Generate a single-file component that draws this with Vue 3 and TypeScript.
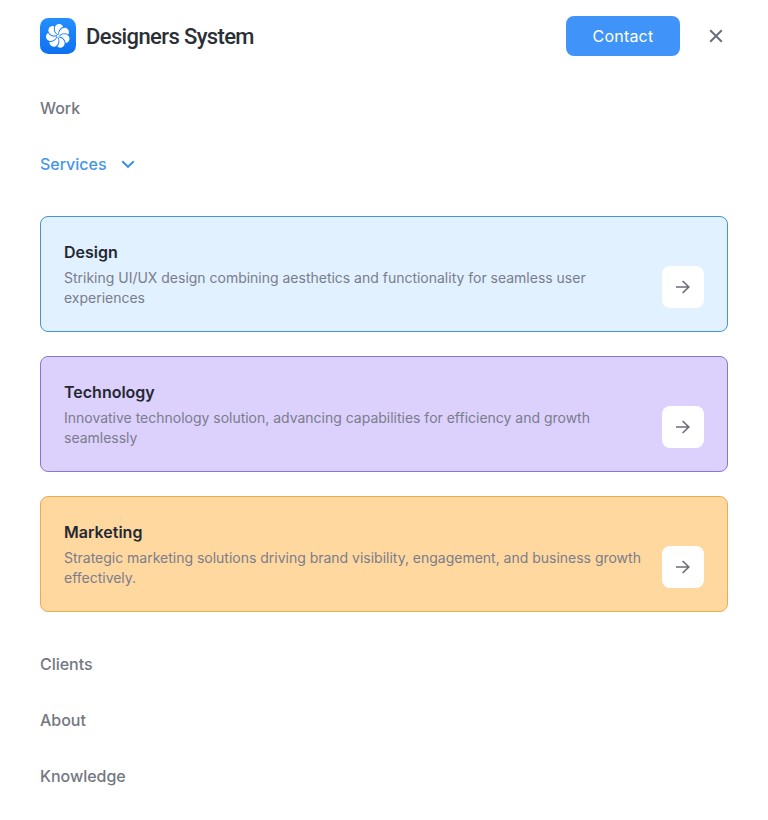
<script setup lang="ts">
import { ref } from 'vue'

interface Service {
  id: string
  title: string
  text: string
}

const services: Service[] = [
  {
    id: 'design',
    title: 'Design',
    text: 'Striking UI/UX design combining aesthetics and functionality for seamless user experiences',
  },
  {
    id: 'technology',
    title: 'Technology',
    text: 'Innovative technology solution, advancing capabilities for efficiency and growth seamlessly',
  },
  {
    id: 'marketing',
    title: 'Marketing',
    text: 'Strategic marketing solutions driving brand visibility, engagement, and business growth effectively.',
  },
]

const petals = Array.from({ length: 7 }, (_, i) => (i * 360) / 7 - 18)
const links: string[] = ['Clients', 'About', 'Knowledge']
const open = ref(true)
</script>

<template>
  <div class="menu">
    <header class="header">
      <a class="brand">
        <svg class="logo" viewBox="0 0 36 36" width="36" height="36">
          <defs>
            <linearGradient id="logo-bg" x1="0" y1="0" x2="0" y2="1">
              <stop offset="0" stop-color="#2490ff" />
              <stop offset="1" stop-color="#0c70f0" />
            </linearGradient>
          </defs>
          <rect width="36" height="36" rx="8.5" fill="url(#logo-bg)" />
          <g transform="translate(18 18)">
            <circle r="8" fill="#fff" />
            <circle
              v-for="angle in petals"
              :key="angle"
              :transform="`rotate(${angle + 180 / 7})`"
              cy="-7.6"
              r="4.4"
              fill="#fff"
            />
            <path
              v-for="angle in petals"
              :key="`s${angle}`"
              :transform="`rotate(${angle})`"
              d="M0-1.5C-2.200-3.500-2.600-7.500 .1-10.800"
              class="seam"
            />
          </g>
        </svg>
        <span class="name">Designers System</span>
      </a>
      <div class="actions">
        <button class="contact" type="button">Contact</button>
        <button class="close" type="button">
          <svg viewBox="0 0 24 24" width="24" height="24">
            <path d="M6.200 6.200l11.600 11.600M17.800 6.200l-11.600 11.600" />
          </svg>
        </button>
      </div>
    </header>

    <nav class="nav">
      <a class="link">Work</a>
      <a class="link active" @click="open = !open">
        Services
        <svg viewBox="0 0 16 16" width="16" height="16">
          <path d="M2.200 5.200L8 10.800l5.800-5.600" />
        </svg>
      </a>
      <div v-if="open" class="cards">
        <article v-for="s in services" :key="s.id" class="card" :class="s.id">
          <div class="copy">
            <h2>{{ s.title }}</h2>
            <p>{{ s.text }}</p>
          </div>
          <span class="go">
            <svg viewBox="0 0 20 20" width="20" height="20">
              <path d="M3 10h13M9.600 4l6.200 6-6.200 6" />
            </svg>
          </span>
        </article>
      </div>
      <a v-for="l in links" :key="l" class="link">{{ l }}</a>
    </nav>
  </div>
</template>

<style>
body {
  margin: 0;
  background: #fff;
}
</style>

<style scoped>
.menu {
  box-sizing: border-box;
  min-height: 820px;
  padding: 0 40px;
  background: #fff;
  font-family: Inter, 'Liberation Sans', sans-serif;
}

.header {
  display: flex;
  align-items: center;
  justify-content: space-between;
  height: 72px;
}

.brand {
  display: flex;
  align-items: center;
  gap: 10px;
}

.logo {
  display: block;
}

.seam {
  stroke: #1980f8;
  stroke-width: 0.95;
  stroke-linecap: round;
}

.name {
  padding-top: 2px;
  color: #2b2f36;
  font-family: Roboto, sans-serif;
  font-size: 22px;
  font-weight: 500;
  line-height: 28px;
  letter-spacing: -0.62px;
}

.actions {
  display: flex;
  align-items: center;
  gap: 24px;
}

button {
  padding: 0;
  border: 0;
  font: inherit;
}

.contact {
  width: 114px;
  height: 40px;
  border-radius: 8px;
  background: #4094f9;
  color: #fff;
  font-size: 16px;
  letter-spacing: 0.2px;
}

.close {
  display: flex;
  background: none;
}

svg path {
  fill: none;
}

.close path {
  stroke: #6b6e7c;
  stroke-width: 2;
}

.nav {
  padding-top: 8px;
}

.link {
  display: flex;
  align-items: center;
  gap: 13px;
  height: 56px;
  color: #74777f;
  font-size: 16px;
  font-weight: 500;
  line-height: 24px;
  letter-spacing: -0.02px;
}

.active {
  color: #4496ea;
}

.active path {
  stroke: #3e91ea;
  stroke-width: 2;
}

.cards {
  display: flex;
  flex-direction: column;
  gap: 24px;
  padding: 24px 0;
}

.card {
  display: flex;
  align-items: flex-end;
  gap: 20px;
  box-sizing: border-box;
  height: 116px;
  padding: 23px;
  border: 1px solid;
  border-radius: 8px;
}

.design {
  border-color: #4792d2;
  background: #e1f1ff;
}

.technology {
  border-color: #8b76d2;
  background: #dcd0fc;
}

.marketing {
  border-color: #e8ad50;
  background: #ffd8a0;
}

.copy {
  flex: 1;
  align-self: flex-start;
}

h2 {
  margin: 0;
  color: #242833;
  font-size: 16px;
  font-weight: 600;
  line-height: 24px;
}

p {
  margin: 4px 0 0;
  color: #7a7d8b;
  font-size: 14px;
  line-height: 20px;
  letter-spacing: -0.01px;
}

.go {
  display: flex;
  flex: none;
  align-items: center;
  justify-content: center;
  width: 42px;
  height: 42px;
  border-radius: 8px;
  background: #fff;
}

.go path {
  stroke: #6b6d75;
  stroke-width: 1.65;
}
</style>
